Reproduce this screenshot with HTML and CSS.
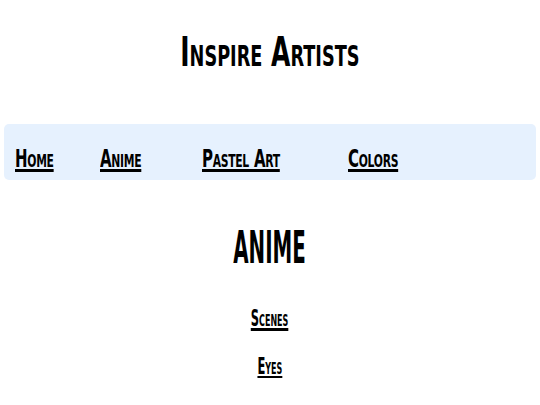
FILE: index.html
```html
<!DOCTYPE html>
<html lang="en">
<head>
<meta charset="utf-8">
<title>Inspire Artists</title>
<link rel="stylesheet" href="styles.css">
</head>
<body>
<header class="site-header">
  <h1 class="site-title">Inspire Artists</h1>
</header>
<nav class="main-nav">
  <a href="#" class="nav-link">Home</a>
  <a href="#" class="nav-link">Anime</a>
  <a href="#" class="nav-link">Pastel Art</a>
  <a href="#" class="nav-link">Colors</a>
</nav>
<main class="content">
  <h2 class="section-title">ANIME</h2>
  <a href="#" class="sub-link">Scenes</a>
  <a href="#" class="sub-link sub-link-last">Eyes</a>
</main>
</body>
</html>
```
FILE: styles.css
```css
html, body {
  margin: 0;
  padding: 0;
  background: #ffffff;
}
body {
  font-family: "DejaVu Sans", sans-serif;
  color: #000;
  padding: 0 4px;
}
.site-header {
  height: 124px;
  display: flex;
  justify-content: center;
  align-items: flex-start;
}
.site-title {
  margin: 32px 0 0;
  font-size: 41px;
  font-weight: 700;
  font-variant: small-caps;
  line-height: 41px;
  transform: scaleX(0.61);
  white-space: nowrap;
}
.main-nav {
  height: 56px;
  background: #e6f1fe;
  border-radius: 5px;
  display: grid;
  grid-template-columns: 85px 102px 146px auto;
  align-items: start;
  padding: 22px 0 0 11px;
  box-sizing: border-box;
}
.nav-link {
  display: inline-block;
  justify-self: start;
  font-size: 25px;
  font-weight: 700;
  font-variant: small-caps;
  line-height: 25px;
  color: #000;
  white-space: nowrap;
  text-decoration: underline;
  text-decoration-thickness: 3px;
  text-underline-offset: 2px;
  letter-spacing: -0.5px;
  transform: scaleX(0.6);
  transform-origin: left center;
}
.content {
  display: flex;
  flex-direction: column;
  align-items: center;
}
.section-title {
  margin: 46px 0 0;
  font-size: 44px;
  font-weight: 700;
  line-height: 44px;
  transform: scaleX(0.45);
}
.sub-link {
  display: inline-block;
  margin-top: 37px;
  font-size: 23px;
  font-weight: 700;
  font-variant: small-caps;
  line-height: 23px;
  color: #000;
  text-decoration: underline;
  text-decoration-thickness: 3px;
  text-underline-offset: 2px;
  transform: scaleX(0.5);
}
.sub-link-last {
  margin-top: 25px;
}
```
